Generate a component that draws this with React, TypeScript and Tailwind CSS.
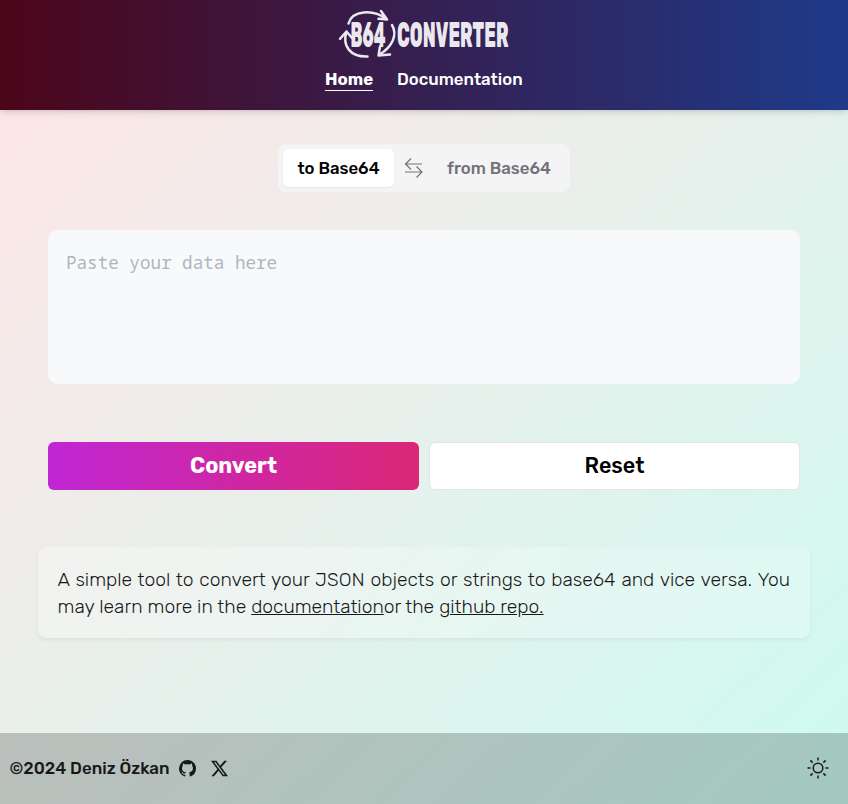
import { VscGithubInverted } from "react-icons/vsc";

function Logo() {
  return (
    <svg className="h-[52px] w-[176px]" viewBox="336 8 176 52" fill="none" aria-label="B64 Converter">
      <g stroke="#eae8ee" strokeWidth="2.5" strokeLinecap="round" strokeLinejoin="round">
        <path d="M348.5 23.5C352 10 373 9 386.5 19M381 11L387 19.5L378.5 18.8" />
        <path d="M367.5 56.5C350 57 342 46 346.5 31.5M340 38.8L346.5 31.5L352 38" />
        <path d="M392 25C398 35 392 47 379.5 54.5M380 46.5L378.5 55.5L390 54.5" />
      </g>
      <g fill="#eae8ee" fontFamily="Rubik, Lato, sans-serif" fontWeight="800">
        <text transform="translate(350.5 46.7) scale(.5 1)" fontSize="35" textLength="70" lengthAdjust="spacingAndGlyphs">B64</text>
        <text transform="translate(397 46.7) scale(.5 1)" fontSize="35" textLength="223" lengthAdjust="spacingAndGlyphs">CONVERTER</text>
      </g>
    </svg>
  );
}

function SwapIcon() {
  return (
    <svg className="h-6 w-6" viewBox="0 0 24 24" fill="none" stroke="#71717a" strokeWidth="1.2">
      <path d="M20 8H3.5M9 2.5L3.5 8L9 13.5M3 16H20M14.5 10.5L20 16L14.5 21.5" />
    </svg>
  );
}

function XIcon() {
  return (
    <svg className="ml-[15px] h-[17px] w-[17px]" viewBox="0 0 16 16" fill="currentColor">
      <path d="M12.6.75h2.454l-5.36 6.142L16 15.25h-4.937l-3.867-5.07-4.425 5.07H.316l5.733-6.57L0 .75h5.063l3.495 4.633L12.601.75Zm-.86 13.028h1.36L4.323 2.145H2.865z" />
    </svg>
  );
}

function SunIcon() {
  return (
    <svg className="h-6 w-6" viewBox="0 0 24 24" fill="none" stroke="#18181b" strokeWidth="1.5">
      <circle cx="12" cy="12" r="4.8" />
      <path d="M12 1.5V4.5M12 19.5V22.5M1.5 12H4.5M19.5 12H22.5M4.4 4.4L6.6 6.6M17.4 17.4L19.6 19.6M4.4 19.6L6.6 17.4M17.4 6.6L19.6 4.4" />
    </svg>
  );
}

export default function App() {
  return (
    <div className="flex h-[804px] flex-col bg-gradient-to-br from-[#ffe4e6] to-[#ccfbf1] font-['Rubik','Roboto',sans-serif] text-black">
      <header className="flex h-[110px] shrink-0 flex-col items-center bg-linear-[to_right,#4c0519,#1e3a8a] pt-2 text-white shadow-md">
        <Logo />
        <nav className="mt-2 flex gap-6 text-[16.8px] leading-[22px]">
          <a className="h-[23px] w-12 border-b border-white font-bold whitespace-nowrap">Home</a>
          <a className="w-[126px] font-medium whitespace-nowrap">Documentation</a>
        </nav>
      </header>
      <main className="flex flex-1 flex-col items-center pt-[34px]">
        <div className="flex h-12 w-[292px] items-center rounded-lg bg-[#f4f4f5] p-[5px] text-[16.8px] font-medium">
          <button className="h-[38px] w-[111px] rounded-md bg-white pt-px whitespace-nowrap shadow-[0_1px_2px_rgba(0,0,0,0.05)]">to Base64</button>
          <span className="ml-2 flex"><SwapIcon /></span>
          <button className="ml-5 w-[106px] pt-px whitespace-nowrap text-[#71717a]">from Base64</button>
        </div>
        <textarea
          className="mt-[38px] h-[154px] w-[752px] resize-none rounded-[10px] bg-[#f7f9fb] px-[18px] pt-[19px] pb-5 font-['Noto_Sans_Mono','DejaVu_Sans_Mono',monospace] text-[17.6px] leading-[26px] outline-none placeholder:text-[#9ca3af]/80"
          placeholder="Paste your data here"
        />
        <div className="mt-[58px] grid h-12 w-[752px] grid-cols-2 gap-2.5 text-[21.6px]">
          <button className="rounded-md bg-linear-[to_right,#c026d3,#db2777] font-bold text-white">Convert</button>
          <button className="rounded-md border border-[#e4e4e7] bg-white font-medium">Reset</button>
        </div>
        <section className="mt-[57px] h-[91px] w-[772px] rounded-lg bg-linear-[to_right,rgb(255_255_255/0.28),rgb(255_255_255/0.22)] pr-5 pl-[19.5px] pt-[19px] text-[19.27px] leading-[27px] font-light text-[#18181b] shadow-[0_2px_4px_rgba(0,0,0,0.06)]">
          <p className="text-justify [text-align-last:justify]">A simple tool to convert your JSON objects or strings to base64 and vice versa. You</p>
          <p className="whitespace-nowrap">may learn more in the <a className="underline">documentation</a>or the <a className="underline">github repo.</a></p>
        </section>
      </main>
      <footer className="flex h-[71px] shrink-0 items-center bg-black/20 pr-[18px] pb-px pl-[9.5px] text-[#18181b]">
        <span className="w-[160px] pt-px text-[16.9px] font-medium whitespace-nowrap">©2024 Deniz Özkan</span>
        <VscGithubInverted className="ml-[9px] h-[17px] w-[17px]" />
        <XIcon />
        <span className="ml-auto"><SunIcon /></span>
      </footer>
    </div>
  );
}
